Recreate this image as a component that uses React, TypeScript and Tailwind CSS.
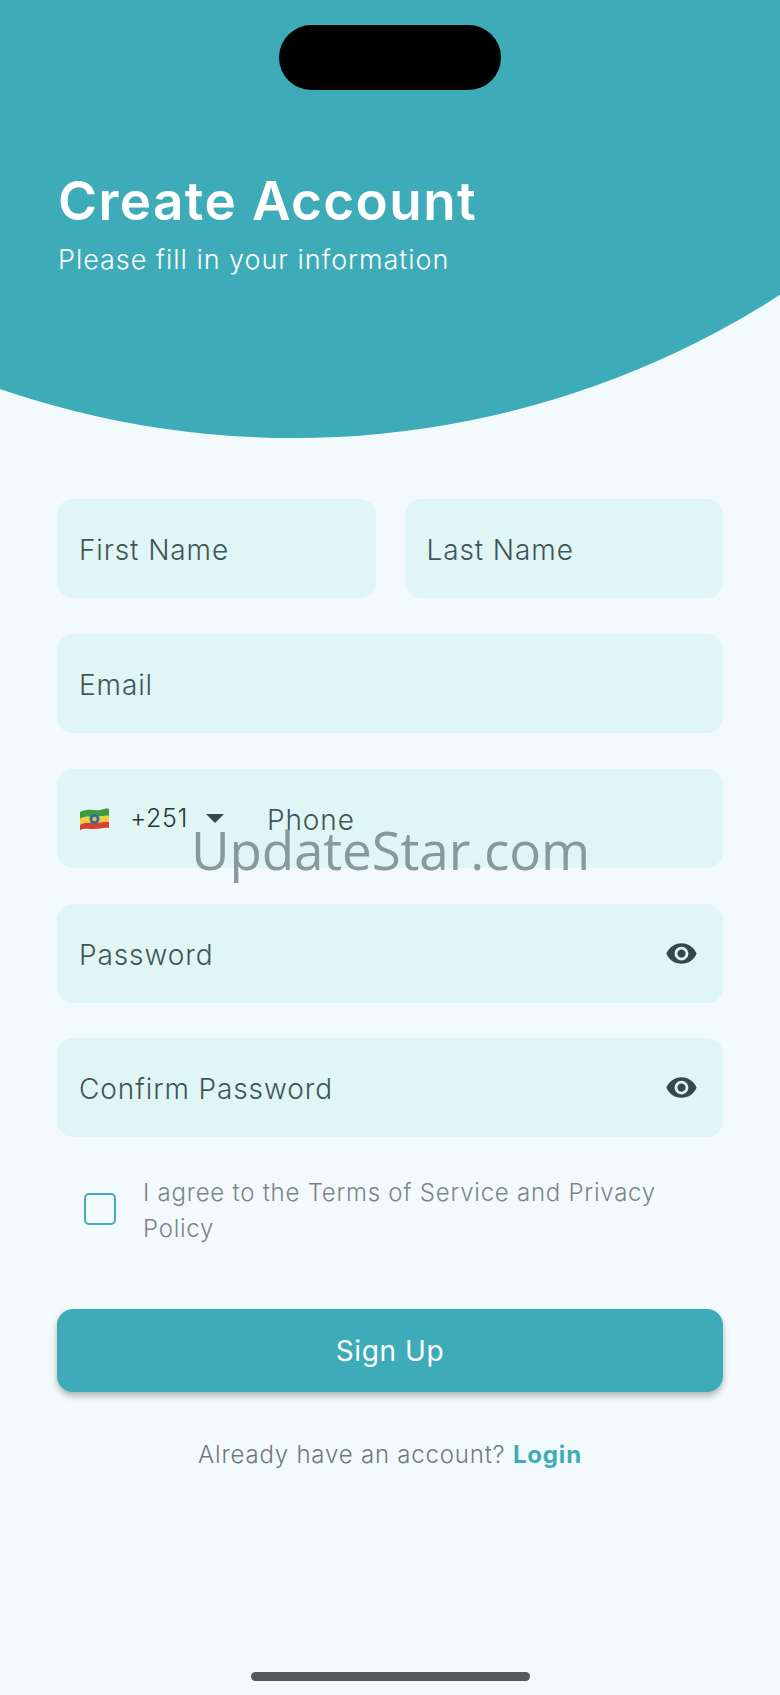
import React from 'react'

const font = { fontFamily: 'Inter, "Liberation Sans", sans-serif' }

const EyeIcon = () => (
  <svg viewBox="0 0 24 24" className="w-[33px] h-[33px] fill-[#35494b]">
    <path d="M12 4.5C7 4.5 2.73 7.61 1 12c1.73 4.39 6 7.5 11 7.5s9.27-3.11 11-7.5c-1.73-4.39-6-7.5-11-7.5zM12 17c-2.76 0-5-2.24-5-5s2.24-5 5-5 5 2.24 5 5-2.24 5-5 5zm0-8c-1.66 0-3 1.34-3 3s1.34 3 3 3 3-1.34 3-3-1.34-3-3-3z" />
  </svg>
)

const Flag = () => (
  <svg viewBox="0 0 29 22" className="w-[29px] h-[22px]">
    <path d="M0 4 C8 0 14 3 20 2 C24 1 27 0 29 1 L29 8 C24 7 20 9 14 9 C9 9 4 8 0 11 Z" fill="#3f9a3a" />
    <path d="M0 11 C4 8 9 9 14 9 C20 9 24 7 29 8 L29 14 C24 13 20 15 14 15 C9 15 4 14 0 17 Z" fill="#f2cf3a" />
    <path d="M0 17 C4 14 9 15 14 15 C20 15 24 13 29 14 L29 20 C24 19 20 21 14 21 C9 21 4 20 0 22 Z" fill="#d8402f" />
    <circle cx="14.5" cy="11" r="5" fill="#2f6fa8" />
    <circle cx="14.5" cy="11" r="2.2" fill="#d9c440" />
  </svg>
)

const Field = ({ label, eye, className = '' }: { label: string; eye?: boolean; className?: string }) => (
  <div className={`h-[99px] rounded-2xl bg-[#e0f5f6] flex items-center justify-between pl-[22px] pr-[25px] ${className}`}>
    <span className="pt-[3px] text-[28px] font-light tracking-[0.9px] text-[#3f5557]">{label}</span>
    {eye && <EyeIcon />}
  </div>
)

export default function App() {
  return (
    <div className="relative w-[780px] h-[1695px] overflow-hidden bg-[#f3fafb]" style={font}>
      {/* Curved header */}
      <div className="relative h-[438px]">
        <svg viewBox="0 0 780 438" className="absolute inset-0 w-[780px] h-[438px]">
          <circle cx="293" cy="-462" r="900" fill="#3dacb8" />
        </svg>
        <div className="absolute left-[279px] top-[25px] w-[222px] h-[65px] rounded-[33px] bg-black" />
        <div className="relative pl-[58px] pt-[171px] text-white">
          <h1 className="text-[53px] leading-[60px] font-semibold tracking-[1.4px]">Create Account</h1>
          <p className="mt-[11px] text-[27px] leading-[36px] font-light tracking-[0.95px]">Please fill in your information</p>
        </div>
      </div>

      {/* Form */}
      <div className="flex flex-col px-[57px] pt-[61px]">
        <div className="flex gap-[29px]">
          <Field label="First Name" className="flex-1" />
          <Field label="Last Name" className="flex-1" />
        </div>
        <Field label="Email" className="mt-[36px]" />

        <div className="mt-[36px] h-[99px] rounded-2xl bg-[#e0f5f6] flex items-center pl-[23px]">
          <Flag />
          <span className="ml-[21px] text-[25px] font-light tracking-[0.6px] text-[#26383a]">+251</span>
          <span className="ml-[18px] w-0 h-0 border-x-[9px] border-x-transparent border-t-[9px] border-t-[#35494b]" />
          <span className="ml-[43px] pt-[3px] text-[28px] font-light tracking-[0.9px] text-[#3f5557]">Phone</span>
        </div>

        <Field label="Password" eye className="mt-[36px]" />
        <Field label="Confirm Password" eye className="mt-[35px]" />

        <div className="mt-[38px] flex items-center pl-[27px]">
          <div className="mb-[4px] w-[32px] h-[32px] rounded-[5px] border-[2.5px] border-[#4aabb6]" />
          <p className="ml-[27px] w-[540px] text-[24px] leading-[35.5px] font-light tracking-[0.75px] text-[#7a8688]">
            I agree to the Terms of Service and Privacy Policy
          </p>
        </div>

        <button className="mt-[63px] h-[83px] rounded-2xl bg-[#3dacb8] text-white text-[28px] font-normal tracking-[0.6px] shadow-[0_4px_6px_rgba(0,0,0,0.28)]">
          Sign Up
        </button>

        <p className="mt-[45px] text-center text-[24px] leading-[36px] font-light tracking-[0.8px] text-[#6e7a7c]">
          Already have an account? <span className="font-bold text-[#3dacb8]">Login</span>
        </p>
      </div>

      {/* Home indicator */}
      <div className="absolute left-[251px] top-[1672px] w-[279px] h-[9px] rounded-full bg-[#55595a]" />

      {/* Watermark */}
      <div
        className="absolute left-[191px] top-[810px] text-[53px] leading-[80px] tracking-[-0.15px] text-[#6f8384]/80"
        style={{ fontFamily: '"Open Sans", "Noto Sans", sans-serif' }}
      >
        UpdateStar.com
      </div>
    </div>
  )
}
